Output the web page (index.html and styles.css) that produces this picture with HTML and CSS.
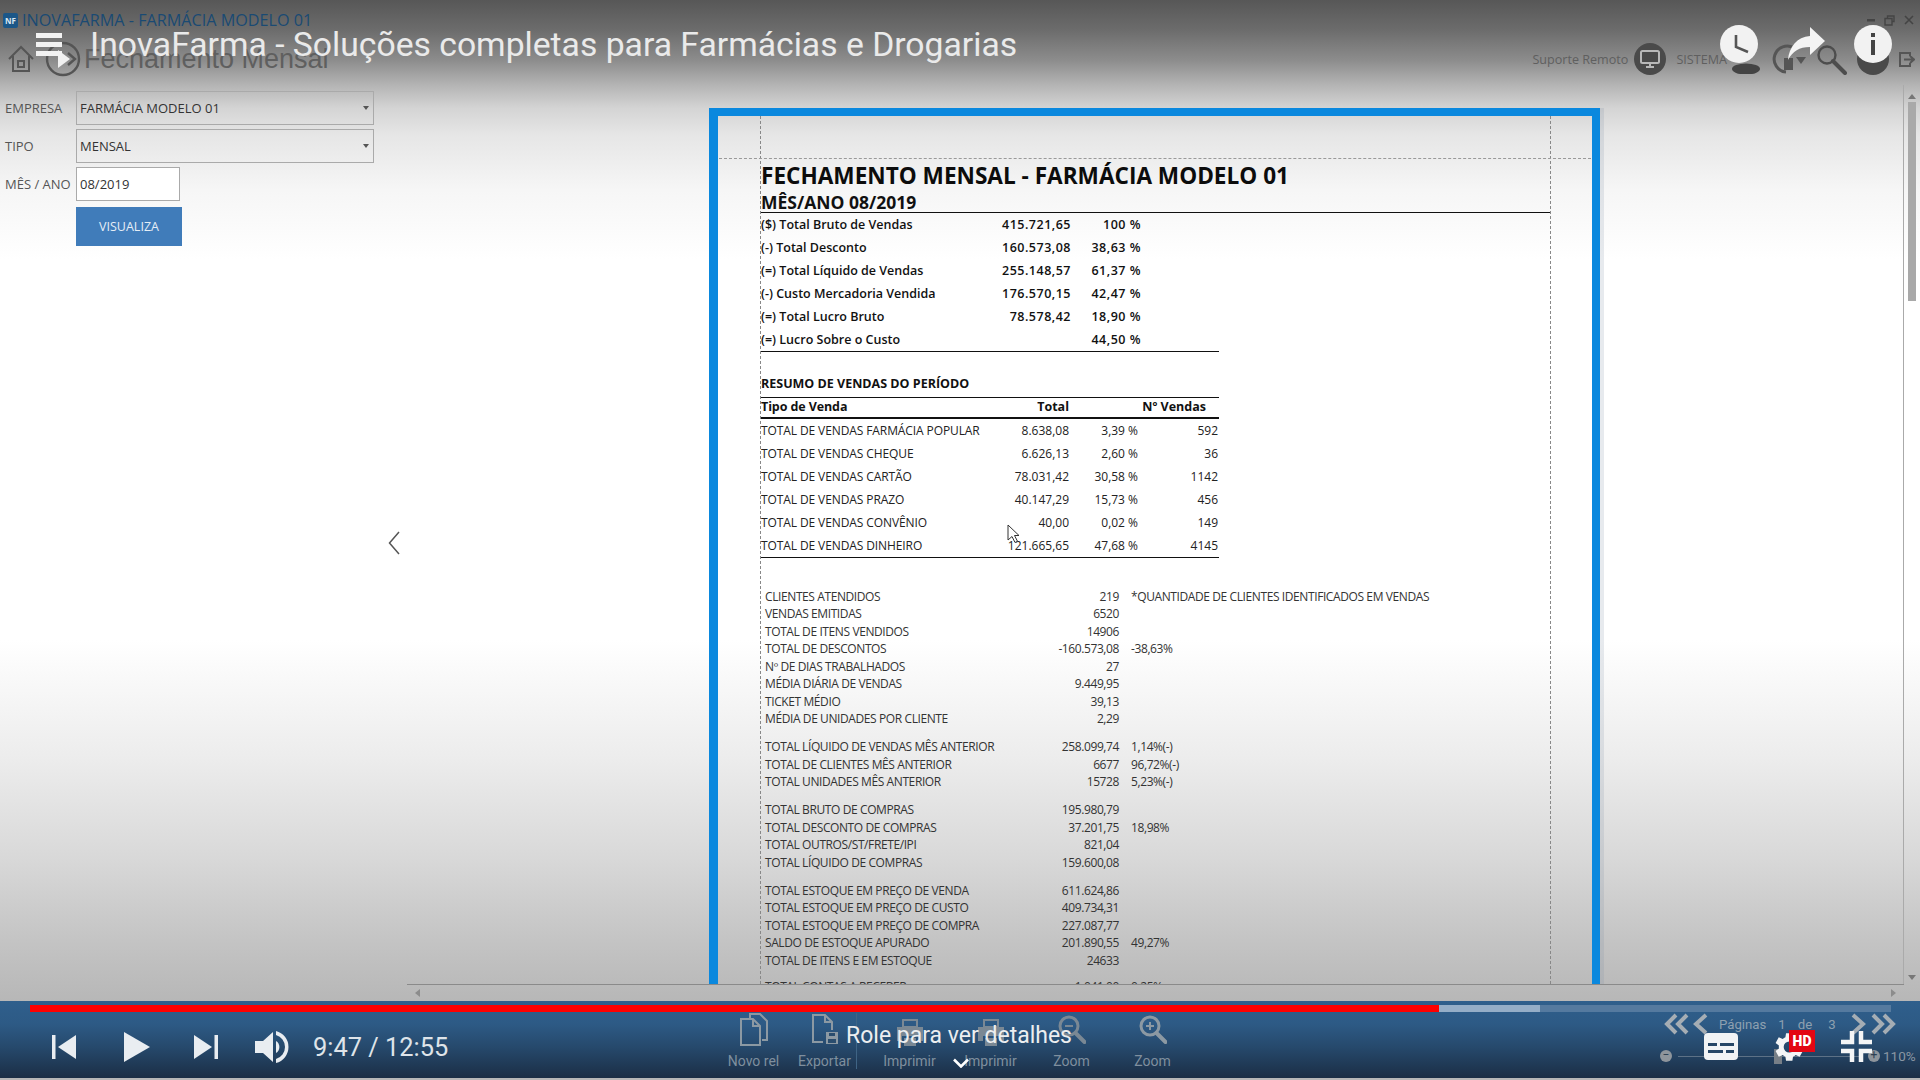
FILE: index.html
```html
<!DOCTYPE html>
<html lang="pt-BR">
<head>
    <meta charset="UTF-8">
    <title>InovaFarma - Fechamento Mensal</title>
    <link rel="stylesheet" href="styles.css">
</head>
<body>
    <!-- Title bar -->
    <header class="titlebar">
        <span class="logo">NF</span>
        <span class="app-name">INOVAFARMA - FARMÁCIA MODELO 01</span>
        <div class="window-btns">
            <svg width="8" height="3" viewBox="0 0 8 3"><rect width="8" height="2.5" y="0" fill="#444"/></svg>
            <svg width="11" height="11" viewBox="0 0 11 11" fill="none" stroke="#444" stroke-width="1.4"><path d="M3.5 3V1h6.5v5.500H8M1 3.500h7V10H1z"/></svg>
            <svg width="10" height="10" viewBox="0 0 10 10" fill="none" stroke="#444" stroke-width="1.6"><path d="M1 1l8 8M9 1l-8 8"/></svg>
        </div>
    </header>

    <!-- Page heading -->
    <div class="pagehead">
        <svg class="home-icon" width="26" height="28" viewBox="0 0 26 28" fill="none" stroke="#555" stroke-width="2"><path d="M1 14L13 2l12 12M5 11v15h16V11M10 16h6v6h-6z"/></svg>
        <svg class="back-icon" width="36" height="36" viewBox="0 0 36 36" fill="none" stroke="#555" stroke-width="2.400"><circle cx="18" cy="18" r="16"/><path d="M23 12l7 6-7 6"/><path d="M13 9l12 9-12 9z" fill="#f0f0f0" stroke="none"/></svg>
        <h1 class="page-title">Fechamento Mensal</h1>
        <div class="head-right">
            <span class="head-text">Suporte Remoto</span>
            <span class="round-btn">
                <svg width="22" height="20" viewBox="0 0 22 20" fill="none" stroke="#b9b9b9" stroke-width="2"><rect x="2" y="2" width="18" height="12" rx="1.500"/><path d="M7 18h8M11 14v4"/></svg>
            </span>
            <span class="head-text system-text">SISTEMA</span>
            <svg class="person-icon" width="28" height="14" viewBox="0 0 28 14"><ellipse cx="14" cy="9" rx="14" ry="5.500" fill="#444"/></svg>
            <svg class="refresh-icon" width="34" height="30" viewBox="0 0 34 30" fill="none" stroke="#555" stroke-width="3"><path d="M22 4A13 13 0 1 0 14 28"/><rect x="12" y="14" width="9" height="12" fill="#555" stroke="none"/><path d="M24 13h10l-5 7z" fill="#555" stroke="none"/></svg>
            <svg class="search-icon" width="31" height="31" viewBox="0 0 31 31" fill="none" stroke="#4d4d4d"><circle cx="11" cy="11" r="8.500" stroke-width="2.400"/><path d="M17 17l12 12" stroke-width="4" stroke-linecap="round"/></svg>
            <span class="round-btn user-btn"></span>
            <svg class="exit-icon" width="16" height="15" viewBox="0 0 16 15" fill="none" stroke="#555" stroke-width="2"><path d="M11 4V1H1v13h10v-3M5 7.500h10M11 4l4 3.500-4 3.500"/></svg>
        </div>
    </div>

    <div class="content">
        <!-- Filter form -->
        <aside class="filters">
            <div class="field">
                <label class="field-label">EMPRESA</label>
                <div class="select-box">FARMÁCIA MODELO 01</div>
            </div>
            <div class="field">
                <label class="field-label">TIPO</label>
                <div class="select-box">MENSAL</div>
            </div>
            <div class="field">
                <label class="field-label">MÊS / ANO</label>
                <input class="date-input" type="text" value="08/2019">
            </div>
            <button class="view-btn">VISUALIZA</button>
        </aside>

        <svg class="collapse-arrow" width="12" height="24" viewBox="0 0 12 24" fill="none" stroke="#555" stroke-width="1.500"><path d="M11 1L1.500 12 11 23"/></svg>

        <!-- Report preview -->
        <main class="sheet">
            <div class="sheet-inner">
                <h2 class="report-title">FECHAMENTO MENSAL - FARMÁCIA MODELO 01</h2>
                <h3 class="report-sub">MÊS/ANO 08/2019</h3>

                <div class="summary">
                    <div class="sum-row"><span>($) Total Bruto de Vendas</span><span class="num">415.721,65</span><span class="num">100 %</span></div>
                    <div class="sum-row"><span>(-) Total Desconto</span><span class="num">160.573,08</span><span class="num">38,63 %</span></div>
                    <div class="sum-row"><span>(=) Total Líquido de Vendas</span><span class="num">255.148,57</span><span class="num">61,37 %</span></div>
                    <div class="sum-row"><span>(-) Custo Mercadoria Vendida</span><span class="num">176.570,15</span><span class="num">42,47 %</span></div>
                    <div class="sum-row"><span>(=) Total Lucro Bruto</span><span class="num">78.578,42</span><span class="num">18,90 %</span></div>
                    <div class="sum-row"><span>(=) Lucro Sobre o Custo</span><span></span><span class="num">44,50 %</span></div>
                </div>

                <div class="section-title">RESUMO DE VENDAS DO PERÍODO</div>
                <div class="sales">
                    <div class="sales-row sales-head"><span>Tipo de Venda</span><span class="num">Total</span><span></span><span class="num head-count">Nº Vendas</span></div>
                    <div class="sales-row"><span>TOTAL DE VENDAS FARMÁCIA POPULAR</span><span class="num">8.638,08</span><span class="num">3,39 %</span><span class="num">592</span></div>
                    <div class="sales-row"><span>TOTAL DE VENDAS CHEQUE</span><span class="num">6.626,13</span><span class="num">2,60 %</span><span class="num">36</span></div>
                    <div class="sales-row"><span>TOTAL DE VENDAS CARTÃO</span><span class="num">78.031,42</span><span class="num">30,58 %</span><span class="num">1142</span></div>
                    <div class="sales-row"><span>TOTAL DE VENDAS PRAZO</span><span class="num">40.147,29</span><span class="num">15,73 %</span><span class="num">456</span></div>
                    <div class="sales-row"><span>TOTAL DE VENDAS CONVÊNIO</span><span class="num">40,00</span><span class="num">0,02 %</span><span class="num">149</span></div>
                    <div class="sales-row"><span>TOTAL DE VENDAS DINHEIRO</span><span class="num">121.665,65</span><span class="num">47,68 %</span><span class="num">4145</span></div>
                </div>

                <div class="stats">
                    <div class="stat-group">
                        <div class="stat-row"><span>CLIENTES ATENDIDOS</span><span class="num">219</span><span>*QUANTIDADE DE CLIENTES IDENTIFICADOS EM VENDAS</span></div>
                        <div class="stat-row"><span>VENDAS EMITIDAS</span><span class="num">6520</span><span></span></div>
                        <div class="stat-row"><span>TOTAL DE ITENS VENDIDOS</span><span class="num">14906</span><span></span></div>
                        <div class="stat-row"><span>TOTAL DE DESCONTOS</span><span class="num">-160.573,08</span><span>-38,63%</span></div>
                        <div class="stat-row"><span>Nº DE DIAS TRABALHADOS</span><span class="num">27</span><span></span></div>
                        <div class="stat-row"><span>MÉDIA DIÁRIA DE VENDAS</span><span class="num">9.449,95</span><span></span></div>
                        <div class="stat-row"><span>TICKET MÉDIO</span><span class="num">39,13</span><span></span></div>
                        <div class="stat-row"><span>MÉDIA DE UNIDADES POR CLIENTE</span><span class="num">2,29</span><span></span></div>
                    </div>
                    <div class="stat-group">
                        <div class="stat-row"><span>TOTAL LÍQUIDO DE VENDAS MÊS ANTERIOR</span><span class="num">258.099,74</span><span>1,14%(-)</span></div>
                        <div class="stat-row"><span>TOTAL DE CLIENTES MÊS ANTERIOR</span><span class="num">6677</span><span>96,72%(-)</span></div>
                        <div class="stat-row"><span>TOTAL UNIDADES MÊS ANTERIOR</span><span class="num">15728</span><span>5,23%(-)</span></div>
                    </div>
                    <div class="stat-group">
                        <div class="stat-row"><span>TOTAL BRUTO DE COMPRAS</span><span class="num">195.980,79</span><span></span></div>
                        <div class="stat-row"><span>TOTAL DESCONTO DE COMPRAS</span><span class="num">37.201,75</span><span>18,98%</span></div>
                        <div class="stat-row"><span>TOTAL OUTROS/ST/FRETE/IPI</span><span class="num">821,04</span><span></span></div>
                        <div class="stat-row"><span>TOTAL LÍQUIDO DE COMPRAS</span><span class="num">159.600,08</span><span></span></div>
                    </div>
                    <div class="stat-group">
                        <div class="stat-row"><span>TOTAL ESTOQUE EM PREÇO DE VENDA</span><span class="num">611.624,86</span><span></span></div>
                        <div class="stat-row"><span>TOTAL ESTOQUE EM PREÇO DE CUSTO</span><span class="num">409.734,31</span><span></span></div>
                        <div class="stat-row"><span>TOTAL ESTOQUE EM PREÇO DE COMPRA</span><span class="num">227.087,77</span><span></span></div>
                        <div class="stat-row"><span>SALDO DE ESTOQUE APURADO</span><span class="num">201.890,55</span><span>49,27%</span></div>
                        <div class="stat-row"><span>TOTAL DE ITENS E EM ESTOQUE</span><span class="num">24633</span><span></span></div>
                    </div>
                    <div class="stat-group stat-cut">
                        <div class="stat-row"><span>TOTAL CONTAS A RECEBER</span><span class="num">1.041,00</span><span>0,25%</span></div>
                    </div>
                </div>
            </div>
        </main>

        <div class="vscroll">
            <svg width="8" height="5" viewBox="0 0 8 5"><path d="M4 0l4 5H0z" fill="#777"/></svg>
            <div class="vscroll-thumb"></div>
            <svg class="vscroll-down" width="8" height="5" viewBox="0 0 8 5"><path d="M4 5l4-5H0z" fill="#777"/></svg>
        </div>
    </div>

    <div class="hscroll">
        <svg width="5" height="8" viewBox="0 0 5 8"><path d="M0 4l5-4v8z" fill="#8c8c8c"/></svg>
        <svg width="5" height="8" viewBox="0 0 5 8"><path d="M5 4L0 0v8z" fill="#8c8c8c"/></svg>
    </div>

    <!-- Report toolbar -->
    <footer class="toolbar">
        <div class="ribbon">
            <div class="ribbon-group">
                <div class="ribbon-item">
                    <svg width="28" height="33" viewBox="0 0 28 33" fill="none" stroke="#8c99a3" stroke-width="2"><path d="M10 6V1h10l7 7v19h-5M1 6h12l7 7v19H1zM13 6v7h7"/></svg>
                    <span>Novo rel</span>
                </div>
                <div class="ribbon-item">
                    <svg width="28" height="33" viewBox="0 0 28 33" fill="none" stroke="#8c99a3" stroke-width="2"><path d="M12 29H2V2h12l7 7v8M14 2v7h7"/><rect x="15" y="19" width="12" height="12" fill="#8c99a3" stroke="none"/><rect x="18" y="20" width="6" height="3" fill="#2a4d6e" stroke="none"/><rect x="17" y="26" width="8" height="4" fill="#2a4d6e" stroke="none"/></svg>
                    <span>Exportar</span>
                </div>
            </div>
            <div class="ribbon-item ribbon-wide">
                <svg width="28" height="33" viewBox="0 -4 28 33" fill="#7a8894"><path d="M7 3h14v7H7z" fill="none" stroke="#7a8894" stroke-width="2"/><path d="M1 10h26v14h-5v-5H6v5H1z"/><rect x="8" y="21" width="12" height="8"/></svg>
                <span>Imprimir</span>
            </div>
            <div class="ribbon-item ribbon-wide">
                <svg width="28" height="33" viewBox="0 -4 28 33" fill="#7a8894"><path d="M7 3h14v7H7z" fill="none" stroke="#7a8894" stroke-width="2"/><path d="M1 10h26v14h-5v-5H6v5H1z"/><rect x="8" y="21" width="12" height="8"/></svg>
                <span>Imprimir</span>
            </div>
            <div class="ribbon-item ribbon-wide">
                <svg width="28" height="33" viewBox="0 0 28 33" fill="none" stroke="#7a8894"><circle cx="11" cy="13" r="9" stroke-width="3"/><path d="M17.500 20l9 9" stroke-width="4" stroke-linecap="round"/><path d="M7 13h8" stroke-width="2"/></svg>
                <span>Zoom</span>
            </div>
            <div class="ribbon-item ribbon-wide">
                <svg width="28" height="33" viewBox="0 0 28 33" fill="none" stroke="#8c99a3"><circle cx="11" cy="13" r="9" stroke-width="3"/><path d="M17.500 20l9 9" stroke-width="4" stroke-linecap="round"/><path d="M7 13h8M11 9v8" stroke-width="2"/></svg>
                <span>Zoom</span>
            </div>
        </div>

        <div class="pager">
            <div class="pager-row">
                <svg width="25" height="22" viewBox="0 0 25 22" fill="none" stroke="#a5adb4" stroke-width="4"><path d="M12 2L3 11l9 9M23 2l-9 9 9 9"/></svg>
                <svg class="pager-prev" width="15" height="22" viewBox="0 0 15 22" fill="none" stroke="#a5adb4" stroke-width="4"><path d="M13 2l-10 9 10 9"/></svg>
                <span class="pager-label">Páginas</span>
                <span class="pager-num">1</span>
                <span class="pager-de">de</span>
                <span class="pager-num">3</span>
                <svg class="pager-next" width="15" height="22" viewBox="0 0 15 22" fill="none" stroke="#a5adb4" stroke-width="4"><path d="M2 2l10 9-10 9"/></svg>
                <svg class="pager-last" width="25" height="22" viewBox="0 0 25 22" fill="none" stroke="#a5adb4" stroke-width="4"><path d="M2 2l9 9-9 9M13 2l9 9-9 9"/></svg>
            </div>
            <div class="zoom-row">
                <span class="zoom-btn">−</span>
                <div class="zoom-track"><span class="zoom-thumb"></span></div>
                <span class="zoom-btn">+</span>
                <span class="zoom-value">110%</span>
            </div>
        </div>

        <!-- Video player controls over the toolbar -->
        <div class="progress">
            <div class="progress-buffer"></div>
            <div class="progress-played"></div>
        </div>

        <div class="player-left">
            <svg width="24" height="24" viewBox="0 0 24 24" fill="#e9edf1"><rect width="3.500" height="24"/><path d="M24 0v24L6 12z"/></svg>
            <svg class="play-icon" width="26" height="30" viewBox="0 0 26 30" fill="#e9edf1"><path d="M0 0l26 15L0 30z"/></svg>
            <svg class="next-icon" width="24" height="24" viewBox="0 0 24 24" fill="#e9edf1"><rect x="20.500" width="3.500" height="24"/><path d="M0 0v24l18-12z"/></svg>
            <svg class="vol-icon" width="36" height="34" viewBox="0 0 36 34" fill="#e9edf1"><path d="M0 11h8L18 2v30L8 23H0z"/><path d="M21 11a7 7 0 0 1 0 12z"/><path d="M21 1a16.500 16.500 0 0 1 0 32v-4a12.500 12.500 0 0 0 0-24z"/></svg>
            <span class="video-time">9:47 / 12:55</span>
        </div>

        <div class="scroll-hint">Role para ver detalhes</div>
        <svg class="hint-chevron" width="16" height="10" viewBox="0 0 16 10" fill="none" stroke="#fff" stroke-width="2.600"><path d="M1 1.500l7 7 7-7"/></svg>

        <div class="player-right">
            <svg width="34" height="27" viewBox="0 0 34 27"><rect width="34" height="27" rx="4" fill="#f1f3f5"/><g fill="#264666"><rect x="4" y="10" width="9" height="3"/><rect x="16" y="10" width="14" height="3"/><rect x="4" y="17" width="15" height="3"/><rect x="22" y="17" width="8" height="3"/></g></svg>
            <div class="gear-wrap">
                <svg class="gear-icon" width="38" height="38" viewBox="0 0 24 24" fill="#f4f5f6"><path d="M19.400 13a7.500 7.500 0 0 0 0-2l2.100-1.600-2-3.500-2.500 1a7.500 7.500 0 0 0-1.700-1L15.400 3.300h-4l-.4 2.600a7.500 7.500 0 0 0-1.700 1l-2.500-1-2 3.500L6.900 11a7.500 7.500 0 0 0 0 2l-2.100 1.600 2 3.500 2.500-1a7.500 7.500 0 0 0 1.700 1l.4 2.600h4l.4-2.600a7.500 7.500 0 0 0 1.700-1l2.500 1 2-3.500zM13.400 15.500a3.500 3.500 0 1 1 0-7 3.500 3.500 0 0 1 0 7z"/></svg>
                <span class="hd-badge">HD</span>
            </div>
            <svg class="exit-full" width="31" height="31" viewBox="0 0 31 31" fill="none" stroke="#f4f5f6" stroke-width="4.500"><path d="M11 0v11H0M20 0v11h11M11 31V20H0M20 31V20h11"/></svg>
        </div>
    </footer>

    <!-- Video title overlay -->
    <div class="player-top">
        <div class="menu-icon"><span></span><span></span><span></span></div>
        <div class="video-title">InovaFarma - Soluções completas para Farmácias e Drogarias</div>
        <div class="player-top-right">
            <svg width="38" height="38" viewBox="0 0 38 38"><circle cx="19" cy="19" r="19" fill="#f2f2f2"/><path d="M16 10v12l12 5" fill="none" stroke="#555" stroke-width="2.600"/></svg>
            <svg width="38" height="34" viewBox="0 0 38 34"><path d="M23 0l15 14-15 14v-8C12 20 6 24 1 33c1-13 9-23 22-24z" fill="#f4f4f4"/></svg>
            <svg width="38" height="38" viewBox="0 0 38 38"><circle cx="19" cy="19" r="19" fill="#f2f2f2"/><rect x="17" y="8" width="4" height="4" fill="#444"/><rect x="17" y="15" width="4" height="15" fill="#444"/></svg>
        </div>
    </div>

    <svg class="cursor" width="13" height="20" viewBox="0 0 13 20" fill="#fff" stroke="#333"><path d="M1 1v15l4-3.500 3 6 2.500-1.200-3-5.800H12z"/></svg>
</body>
</html>
```

FILE: styles.css
```css
* {
    box-sizing: border-box;
}

html, body {
    margin: 0;
    height: 100%;
}

body {
    position: relative;
    width: 1920px;
    height: 1080px;
    overflow: hidden;
    font-family: "Open Sans", sans-serif;
    color: #222;
    background: linear-gradient(to bottom,
        #575757 0, #6c6c6c 30px, #8c8c8c 60px, #b4b4b4 85px, #d4d4d4 108px,
        #e6e6e6 135px, #f6f6f6 190px, #fff 260px, #fff 640px,
        #ececec 760px, #d8d8d8 860px, #c4c4c4 940px, #b7b7b7 1001px);
}

/* title bar */
.titlebar {
    display: flex;
    align-items: center;
    height: 36px;
    padding: 4px 6px 0 3px;
}

.logo {
    width: 15px;
    height: 15px;
    margin-right: 4px;
    border-radius: 2px;
    background-color: #1c5788;
    color: #dbe8f2;
    font-size: 8px;
    font-weight: 700;
    line-height: 15px;
    text-align: center;
}

.app-name {
    font-size: 16.2px;
    color: #1a4a73;
}

.window-btns {
    display: flex;
    align-items: center;
    gap: 9px;
    margin-left: auto;
}

/* page heading */
.pagehead {
    display: flex;
    align-items: center;
    height: 46px;
    padding: 0 5px 0 8px;
}

.back-icon {
    margin-left: 11px;
}

.page-title {
    margin: 0 0 0 3px;
    font-family: "Liberation Sans", sans-serif;
    font-size: 27px;
    font-weight: 400;
    color: #5f5f5f;
}

.head-right {
    display: flex;
    align-items: center;
    margin-left: auto;
}

.head-text {
    font-size: 12.6px;
    color: #5f5f5f;
}

.round-btn {
    display: flex;
    align-items: center;
    justify-content: center;
    width: 32px;
    height: 32px;
    margin-left: 6px;
    border-radius: 50%;
    background-color: #4a4a4a;
}

.system-text {
    margin-left: 10px;
}

.person-icon {
    margin: 15px 0 0 5px;
}

.refresh-icon {
    margin-left: 12px;
}

.search-icon {
    margin-left: 10px;
}

.user-btn {
    margin-left: 10px;
}

.exit-icon {
    margin-left: 10px;
}

/* main area */
.content {
    display: flex;
    height: 902px;
    overflow: hidden;
}

.filters {
    flex: none;
    width: 388px;
    padding: 9px 0 0 5px;
}

.field {
    display: flex;
    align-items: center;
    height: 34px;
    margin-bottom: 4px;
}

.field-label {
    width: 71px;
    font-size: 13px;
    color: #555;
}

.select-box {
    position: relative;
    width: 298px;
    height: 34px;
    padding-left: 3px;
    border: 1px solid #aaa;
    font-size: 13px;
    line-height: 32px;
    color: #333;
}

.select-box::after {
    content: "";
    position: absolute;
    top: 14px;
    right: 4px;
    border-left: 3px solid transparent;
    border-right: 3px solid transparent;
    border-top: 4px solid #555;
}

.date-input {
    width: 104px;
    height: 34px;
    padding: 0 3px;
    border: 1px solid #aaa;
    border-radius: 0;
    background-color: #fff;
    font-family: "Open Sans", sans-serif;
    font-size: 13px;
    color: #333;
}

.view-btn {
    display: block;
    width: 106px;
    height: 39px;
    margin: 6px 0 0 71px;
    border: none;
    background-color: #407cba;
    font-family: "Open Sans", sans-serif;
    font-size: 12.5px;
    color: #e6eef6;
}

.collapse-arrow {
    flex: none;
    margin-top: 449px;
}

/* report sheet */
.sheet {
    flex: none;
    width: 891px;
    height: 876px;
    margin: 26px 0 0 309px;
    border-top: 8px solid #0a88de;
    border-left: 9px solid #0a88de;
    border-right: 8px solid #0a88de;
    box-shadow: 4px 0 0 rgba(120, 140, 160, 0.18);
}

.sheet-inner {
    position: relative;
    height: 100%;
    margin: 0 41px 0 42px;
    padding-top: 44px;
    border-left: 1px dashed #888;
    border-right: 1px dashed #888;
}

.sheet-inner::before {
    content: "";
    position: absolute;
    top: 42px;
    left: -42px;
    right: -41px;
    border-top: 1px dashed #999;
}

.report-title {
    height: 31px;
    margin: 0;
    font-size: 22.6px;
    font-weight: 700;
    line-height: 32px;
    color: #0c0c0c;
    white-space: nowrap;
}

.report-sub {
    height: 22px;
    margin: 0;
    border-bottom: 1px solid #111;
    font-size: 17.5px;
    font-weight: 700;
    line-height: 23px;
    color: #111;
}

.summary {
    width: 458px;
    border-bottom: 1px solid #111;
}

.sum-row {
    display: grid;
    grid-template-columns: 210px 100px 70px;
    align-items: center;
    height: 23px;
    font-size: 12.5px;
    font-weight: 600;
    color: #111;
}

.sum-row .num {
    letter-spacing: 0.5px;
}

.num {
    text-align: right;
    white-space: nowrap;
}

.section-title {
    height: 20px;
    margin-top: 22px;
    font-size: 12.5px;
    font-weight: 700;
    line-height: 20px;
    color: #111;
}

.sales {
    width: 458px;
    margin-top: 3px;
    border-top: 1px solid #111;
    border-bottom: 1px solid #111;
}

.sales-row {
    display: grid;
    grid-template-columns: 226px 82px 69px 80px;
    align-items: center;
    height: 23px;
    font-size: 12px;
    letter-spacing: -0.1px;
    color: #222;
    white-space: nowrap;
}

.sales-row .num {
    letter-spacing: 0;
}

.sales-head {
    height: 21px;
    padding-bottom: 2px;
    border-bottom: 2px solid #111;
    font-size: 12.5px;
    font-weight: 700;
    color: #111;
}

.head-count {
    padding-right: 12px;
}

.stats {
    margin-top: 29.5px;
    padding-left: 4px;
}

.stat-group {
    margin-bottom: 10.5px;
}

.stat-cut {
    margin-top: -1.5px;
}

.stat-row {
    display: grid;
    grid-template-columns: 254px 100px auto;
    height: 17.5px;
    font-size: 12px;
    line-height: 17.5px;
    letter-spacing: -0.4px;
    color: #333;
    white-space: nowrap;
}

.stat-row > span:last-child {
    padding-left: 12px;
}

/* scrollbars */
.vscroll {
    display: flex;
    flex-direction: column;
    align-items: center;
    flex: none;
    width: 17px;
    height: 899px;
    margin: 3px 0 0 303px;
    padding-top: 9px;
    border-left: 1px solid #aaa;
}

.vscroll-thumb {
    width: 8px;
    height: 199px;
    margin-top: 3px;
    background-color: #a9a9a9;
}

.vscroll-down {
    margin-top: auto;
    margin-bottom: 4px;
}

.hscroll {
    position: relative;
    display: flex;
    align-items: center;
    justify-content: space-between;
    width: 1497px;
    height: 17px;
    margin-left: 407px;
    padding: 0 8px;
    border-top: 1px solid #8a8a8a;
}

/* toolbar */
.toolbar {
    position: relative;
    display: flex;
    height: 77px;
    padding-top: 12px;
    background: linear-gradient(to bottom, #2f5f8c 0, #2d5a85 30%, #26496c 60%, #1b2e45 100%);
}

.ribbon {
    display: flex;
    margin-left: 718px;
}

.ribbon-group {
    display: flex;
    width: 139px;
    height: 56px;
    margin-right: 12px;
    border-right: 1px solid #3f6485;
}

.ribbon-item {
    display: flex;
    flex: none;
    flex-direction: column;
    align-items: center;
    width: 71px;
    font-family: "Roboto", sans-serif;
    font-size: 14px;
    color: #7f8f9e;
}

.ribbon-item span {
    margin-top: 7px;
}

.ribbon-wide {
    width: 81px;
}

.pager {
    position: absolute;
    top: 12px;
    left: 1664px;
    width: 256px;
}

.pager-row {
    display: flex;
    align-items: center;
    height: 22px;
    font-family: "Roboto", sans-serif;
    font-size: 13.2px;
    color: #8ea0b0;
}

.pager-prev {
    margin-left: 4px;
}

.pager-label {
    margin-left: 11px;
}

.pager-num {
    margin-left: 12px;
}

.pager-de {
    margin-left: 12px;
}

.pager-de + .pager-num {
    margin-left: 16px;
}

.pager-next {
    margin-left: 15px;
}

.pager-last {
    margin-left: 5px;
}

.zoom-row {
    display: flex;
    align-items: center;
    height: 22px;
    margin: 10px 0 0 -4px;
    font-family: "Roboto", sans-serif;
    color: #8a97a3;
}

.zoom-btn {
    width: 12px;
    height: 12px;
    border-radius: 50%;
    background-color: #8e959c;
    font-size: 12px;
    line-height: 11px;
    text-align: center;
    color: #2c3f52;
}

.zoom-track {
    position: relative;
    width: 184px;
    height: 1px;
    margin: 0 6px;
    background-color: #5d7186;
}

.zoom-thumb {
    position: absolute;
    top: -7px;
    left: 96px;
    width: 8px;
    height: 15px;
    background-color: #777f87;
}

.zoom-value {
    margin-left: 3px;
    font-size: 13.5px;
}

/* player controls */
.progress {
    position: absolute;
    top: 4px;
    left: 30px;
    width: 1861px;
    height: 7px;
    background-color: #557a9f;
}

.progress-buffer {
    position: absolute;
    top: 0;
    left: 0;
    width: 1510px;
    height: 7px;
    background-color: #95aec7;
}

.progress-played {
    position: absolute;
    top: 0;
    left: 0;
    width: 1409px;
    height: 7px;
    background-color: #f00;
}

.player-left {
    position: absolute;
    top: 29px;
    left: 52px;
    display: flex;
    align-items: center;
    height: 34px;
}

.play-icon {
    margin-left: 48px;
}

.next-icon {
    margin-left: 44px;
}

.vol-icon {
    margin-left: 37px;
}

.video-time {
    margin-left: 22px;
    font-family: "Roboto", sans-serif;
    font-size: 25.4px;
    color: #dfe4e9;
}

.scroll-hint {
    position: absolute;
    top: 20px;
    left: 846px;
    font-family: "Roboto", sans-serif;
    font-size: 23px;
    line-height: 30px;
    color: #eceef0;
}

.hint-chevron {
    position: absolute;
    top: 57px;
    left: 953px;
}

.player-right {
    position: absolute;
    top: 30px;
    left: 1704px;
    display: flex;
    align-items: center;
}

.gear-wrap {
    position: relative;
    width: 31px;
    height: 31px;
    margin-left: 35px;
}

.gear-icon {
    position: absolute;
    top: -3px;
    left: -5px;
}

.hd-badge {
    position: absolute;
    top: -1px;
    left: 16px;
    width: 26px;
    height: 22px;
    background-color: #e30613;
    font-family: "Roboto", sans-serif;
    font-size: 14px;
    font-weight: 900;
    line-height: 22px;
    text-align: center;
    color: #fff;
}

.exit-full {
    margin-left: 37px;
}

/* video title */
.player-top {
    position: absolute;
    top: 0;
    left: 0;
    right: 0;
    display: flex;
    align-items: center;
    height: 88px;
    padding: 0 28px 0 36px;
}

.menu-icon {
    display: flex;
    flex-direction: column;
    gap: 4px;
    width: 26px;
    margin-right: 28px;
}

.menu-icon span {
    height: 5px;
    background-color: #f2f2f2;
}

.video-title {
    font-family: "Roboto", sans-serif;
    font-size: 33.7px;
    color: #eaeaea;
}

.player-top-right {
    display: flex;
    align-items: center;
    gap: 29px;
    margin-left: auto;
}

.cursor {
    position: absolute;
    top: 524px;
    left: 1007px;
}
```
